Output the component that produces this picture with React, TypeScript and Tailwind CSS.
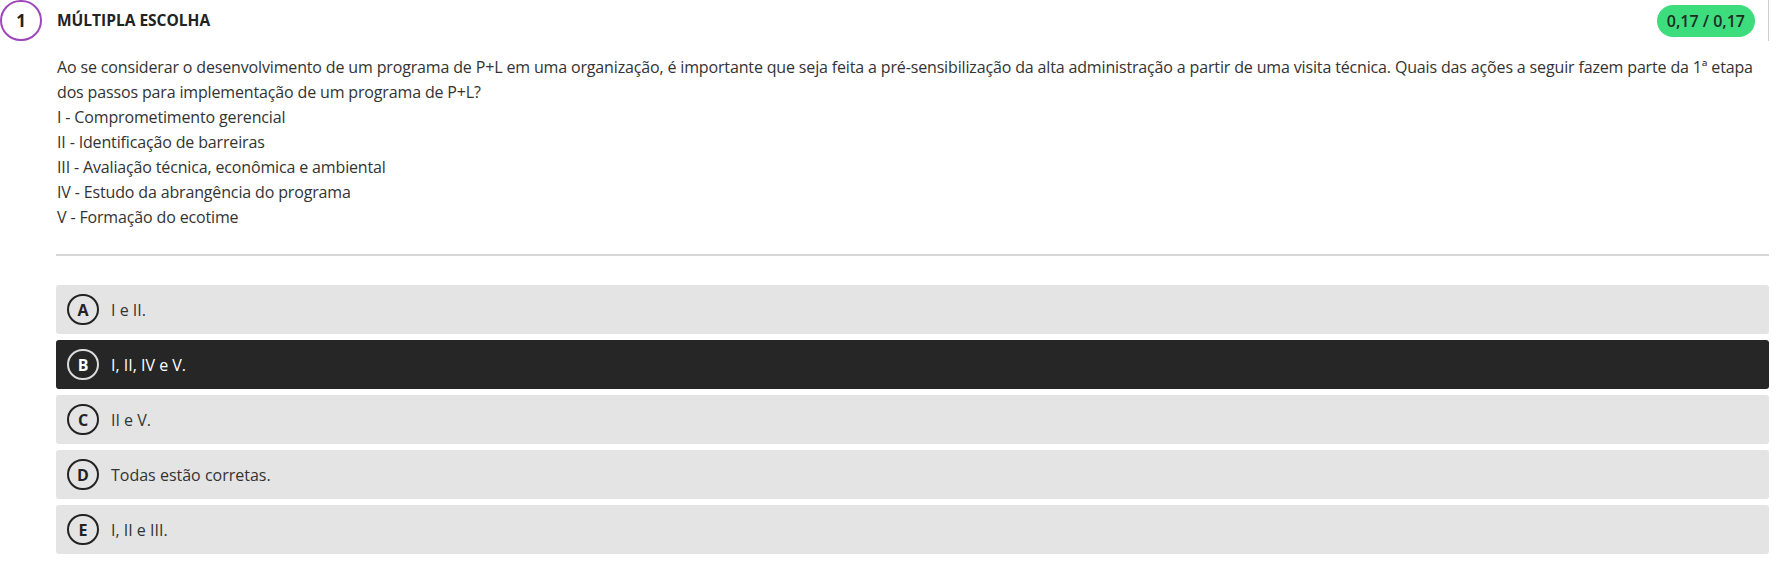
import React from 'react';

const options = [
  { letter: 'A', text: 'I e II.' },
  { letter: 'B', text: 'I, II, IV e V.', selected: true },
  { letter: 'C', text: 'II e V.' },
  { letter: 'D', text: 'Todas estão corretas.' },
  { letter: 'E', text: 'I, II e III.' },
];

export default function App() {
  return (
    <div
      className="w-[1778px] h-[562px] overflow-hidden bg-white text-[#333]"
      style={{ fontFamily: '"Open Sans", "Liberation Sans", sans-serif' }}
    >
      {/* Question header */}
      <div className="flex items-center h-[41px] w-[1769px] pr-[13px] border-r border-[#cfcfcf]">
        <div className="w-[42px] h-[41px] rounded-full border-2 border-[#a046bd] flex items-center justify-center text-[17px] font-bold text-[#222]">
          1
        </div>
        <div className="ml-[15px] text-[15.5px] font-bold text-[#222] uppercase">Múltipla escolha</div>
        <div className="flex-1" />
        <div className="h-[32px] px-[10px] rounded-full bg-[#3ddc7c] flex items-center text-[16px] font-semibold text-[#1e2b25]">
          0,17 / 0,17
        </div>
      </div>

      {/* Statement */}
      <div className="pl-[57px] pr-[9px] mt-[14px] text-[16px] leading-[25px] tracking-[-0.15px] text-[#333]">
        <p>
          Ao se considerar o desenvolvimento de um programa de P+L em uma organização, é importante que seja feita a
          pré-sensibilização da alta administração a partir de uma visita técnica. Quais das ações a seguir fazem parte da
          1ª etapa dos passos para implementação de um programa de P+L?
        </p>
        <p>I - Comprometimento gerencial</p>
        <p>II - Identificação de barreiras</p>
        <p>III - Avaliação técnica, econômica e ambiental</p>
        <p>IV - Estudo da abrangência do programa</p>
        <p>V - Formação do ecotime</p>
      </div>

      <div className="ml-[56px] w-[1713px] mt-[24px] border-t-2 border-[#d6d6d6]" />

      {/* Alternatives */}
      <div className="ml-[56px] w-[1713px] mt-[29px] flex flex-col gap-[6px]">
        {options.map((o) => (
          <div
            key={o.letter}
            className={
              o.selected
                ? 'h-[49px] rounded-[3px] bg-[#262626] text-white flex items-center pl-[11px]'
                : 'h-[49px] rounded-[3px] bg-[#e4e4e4] text-[#333] flex items-center pl-[11px]'
            }
          >
            <div
              className={
                o.selected
                  ? 'w-[32px] h-[31px] rounded-full border-2 border-[#dcdcdc] flex items-center justify-center text-[16px] font-bold text-white'
                  : 'w-[32px] h-[31px] rounded-full border-2 border-[#222] flex items-center justify-center text-[16px] font-bold text-[#222]'
              }
            >
              {o.letter}
            </div>
            <span className={o.selected ? 'ml-[12px] text-[16px] font-medium' : 'ml-[12px] text-[16px]'}>{o.text}</span>
          </div>
        ))}
      </div>
    </div>
  );
}
